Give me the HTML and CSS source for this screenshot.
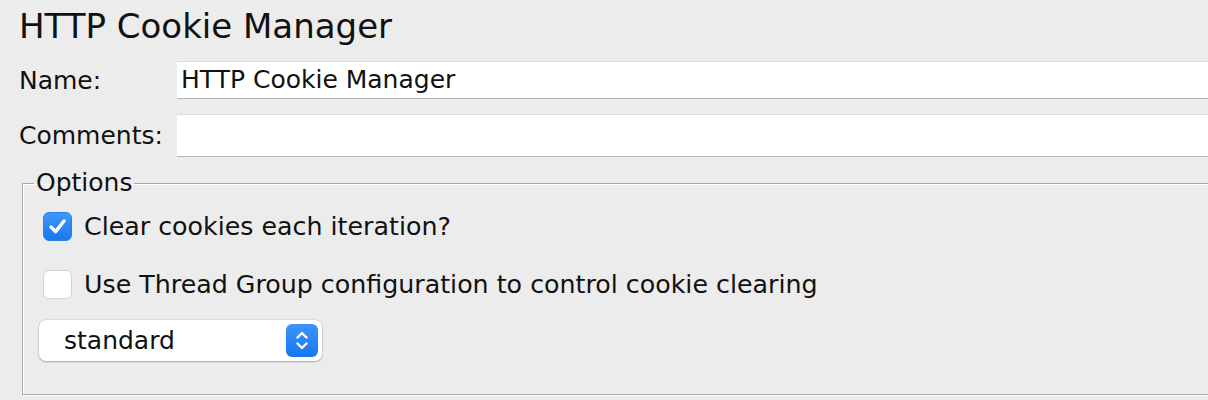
FILE: index.html
```html
<!DOCTYPE html>
<html>
<head>
<meta charset="utf-8">
<link rel="stylesheet" href="styles.css">
</head>
<body>
<div class="page">
  <h1 class="title">HTTP Cookie Manager</h1>
  <div class="row row-name">
    <label class="label">Name:</label>
    <div class="field">HTTP Cookie Manager</div>
  </div>
  <div class="row row-comments">
    <label class="label">Comments:</label>
    <div class="field"></div>
  </div>
  <fieldset class="options">
    <legend class="legend">Options</legend>
    <div class="check-row first">
      <span class="box checked">
        <svg width="29" height="29" viewBox="0 0 29 29"><path d="M7.5 15 L12.5 20 L21.5 8.5" fill="none" stroke="#fff" stroke-width="3.6" stroke-linecap="round" stroke-linejoin="round"/></svg>
      </span>
      <span class="check-text">Clear cookies each iteration?</span>
    </div>
    <div class="check-row">
      <span class="box"></span>
      <span class="check-text">Use Thread Group configuration to control cookie clearing</span>
    </div>
    <div class="select">
      <span class="select-text">standard</span>
      <span class="select-btn">
        <svg width="32" height="33" viewBox="0 0 32 33"><path d="M11.5 13.5 L16 9 L20.5 13.5 M11.5 19.5 L16 24 L20.5 19.5" fill="none" stroke="#fff" stroke-width="2.4" stroke-linecap="round" stroke-linejoin="round"/></svg>
      </span>
    </div>
  </fieldset>
</div>
</body>
</html>
```
FILE: styles.css
```css
html, body {
  margin: 0;
  padding: 0;
  background: #ececec;
  overflow: hidden;
}
body {
  width: 1208px;
  height: 400px;
  font-family: "DejaVu Sans", "Liberation Sans", sans-serif;
  color: #111;
}
.page {
  padding: 0 0 0 19px;
}
.title {
  margin: 0;
  padding-top: 4px;
  height: 48px;
  font-size: 34px;
  font-weight: normal;
  line-height: 44px;
}
.row {
  display: flex;
  align-items: center;
}
.row-name {
  margin-top: 9px;
}
.row-comments {
  margin-top: 15px;
}
.label {
  width: 158px;
  flex: none;
  font-size: 25px;
}
.field {
  flex: 1;
  margin-right: -10px;
  height: 36px;
  background: #fff;
  border-top: 1px solid #dedede;
  border-bottom: 1px solid #b5b5b5;
  font-size: 25px;
  line-height: 36px;
  padding-left: 4px;
}
.row-comments .field {
  height: 41px;
}
.options {
  margin: 13px 0 0 3px;
  margin-right: -20px;
  padding: 0 0 0 20px;
  height: 223px;
  border: 1px solid #a8a8a8;
  box-shadow: inset 1px 1px 0 #fff, 1px 1px 0 #fff;
  border-radius: 0;
}
.legend {
  font-size: 25px;
  padding: 0 2px 0 2px;
  margin-left: -9px;
  line-height: 26px;
}
.check-row {
  display: flex;
  align-items: center;
  height: 29px;
  margin-top: 29px;
}
.check-row.first {
  margin-top: 16px;
}
.box {
  width: 27px;
  height: 27px;
  border-radius: 6px;
  background: #fff;
  border: 1px solid #d2d2d2;
  flex: none;
  display: flex;
  align-items: center;
  justify-content: center;
}
.box.checked {
  background: linear-gradient(#3f97fb, #1a78ee);
  border-color: #2a80ea;
}
.box svg {
  display: block;
}
.check-text {
  margin-left: 12px;
  font-size: 25.3px;
}
.select {
  display: flex;
  align-items: center;
  justify-content: space-between;
  width: 283px;
  height: 41px;
  margin-top: 21px;
  margin-left: -4px;
  background: #fff;
  border-radius: 7px;
  box-shadow: 0 0 0 0.5px rgba(0,0,0,0.12), 0 1px 2px rgba(0,0,0,0.25);
  box-sizing: border-box;
  padding: 0 4px 0 25px;
}
.select-text {
  font-size: 25px;
}
.select-btn {
  width: 32px;
  height: 33px;
  border-radius: 6px;
  background: linear-gradient(#3d95fb, #1877ef);
  display: flex;
  align-items: center;
  justify-content: center;
}
.select-btn svg {
  display: block;
}
```
